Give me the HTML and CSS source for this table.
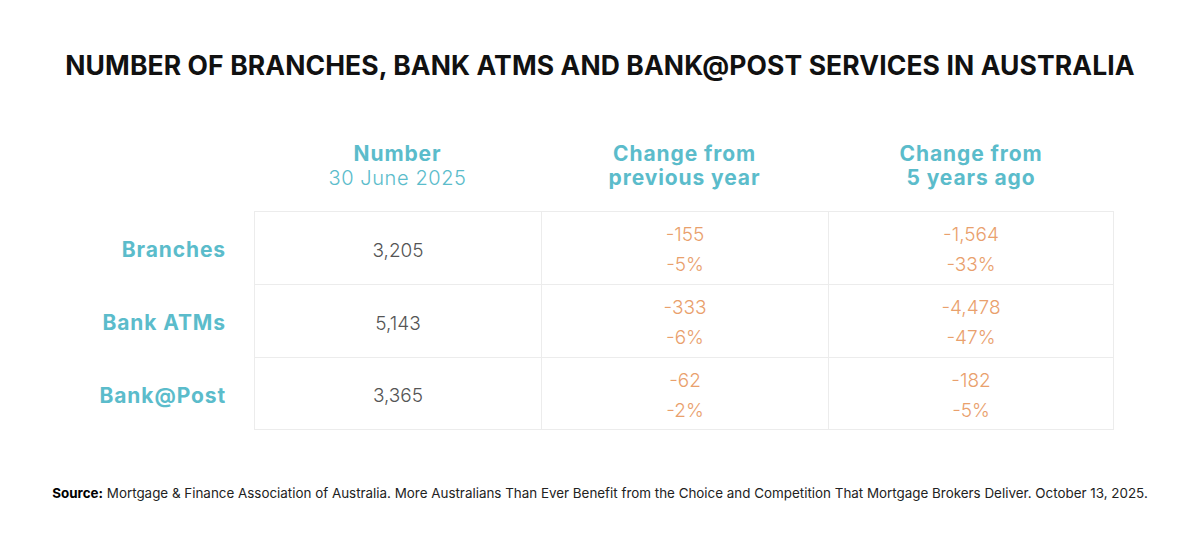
FILE: index.html
```html
<!DOCTYPE html>
<html>
<head>
<meta charset="utf-8">
<link rel="stylesheet" href="styles.css">
</head>
<body>
<div class="page">
  <h1 class="title">NUMBER OF BRANCHES, BANK ATMS AND BANK@POST SERVICES IN AUSTRALIA</h1>
  <div class="grid">
    <div class="head-empty"></div>
    <div class="head"><span class="hb">Number</span><span class="hl">30 June 2025</span></div>
    <div class="head"><span class="hb">Change from</span><span class="hb">previous year</span></div>
    <div class="head"><span class="hb">Change from</span><span class="hb">5 years ago</span></div>

    <div class="label">Branches</div>
    <div class="cell num">3,205</div>
    <div class="cell chg"><span>-155</span><span>-5%</span></div>
    <div class="cell chg last"><span>-1,564</span><span>-33%</span></div>

    <div class="label">Bank ATMs</div>
    <div class="cell num">5,143</div>
    <div class="cell chg"><span>-333</span><span>-6%</span></div>
    <div class="cell chg last"><span>-4,478</span><span>-47%</span></div>

    <div class="label">Bank@Post</div>
    <div class="cell num bottom">3,365</div>
    <div class="cell chg bottom"><span>-62</span><span>-2%</span></div>
    <div class="cell chg last bottom"><span>-182</span><span>-5%</span></div>
  </div>
  <p class="source"><b>Source:</b> Mortgage &amp; Finance Association of Australia. More Australians Than Ever Benefit from the Choice and Competition That Mortgage Brokers Deliver. October 13, 2025.</p>
</div>
</body>
</html>
```
FILE: styles.css
```css
html, body {
  margin: 0;
  padding: 0;
  background: #ffffff;
}
.page {
  width: 1200px;
  height: 555px;
  display: flex;
  flex-direction: column;
  align-items: center;
  font-family: "Inter", "Open Sans", sans-serif;
}
.title {
  margin: 49px 0 0 0;
  font-family: "Inter", sans-serif;
  font-weight: 700;
  font-size: 26.5px;
  line-height: 32px;
  color: #111111;
  letter-spacing: 0.1px;
}
.grid {
  margin-top: 46px;
  display: grid;
  grid-template-columns: 254px 287px 287px 286px;
  grid-template-rows: 84px 73px 73px 73px;
  align-self: flex-start;
}
.head {
  display: flex;
  flex-direction: column;
  align-items: center;
  justify-content: flex-start;
  padding-top: 15px;
  color: #5bbccb;
  font-size: 21px;
  line-height: 24px;
}
.hb { font-weight: 700; letter-spacing: 0.9px; }
.hl { font-weight: 300; font-size: 20px; letter-spacing: 0.6px; }
.label {
  display: flex;
  align-items: center;
  justify-content: flex-end;
  padding-right: 28px;
  padding-top: 4px;
  color: #5bbccb;
  font-weight: 700;
  font-size: 21px;
  letter-spacing: 0.9px;
}
.cell {
  border-top: 1px solid #ececec;
  border-left: 1px solid #ececec;
  display: flex;
  flex-direction: column;
  align-items: center;
  justify-content: center;
  font-size: 19px;
  font-weight: 300;
}
.cell.last { border-right: 1px solid #ececec; }
.cell.bottom { border-bottom: 1px solid #ececec; }
.num {
  color: #555555;
  padding-top: 4px;
}
.chg {
  color: #e9a06c;
  line-height: 30px;
  padding-top: 4px;
}
.source {
  margin: 55px 0 0 0;
  font-size: 13.4px;
  color: #222222;
  font-weight: 400;
}
.source b { font-weight: 700; color: #000; }
```
